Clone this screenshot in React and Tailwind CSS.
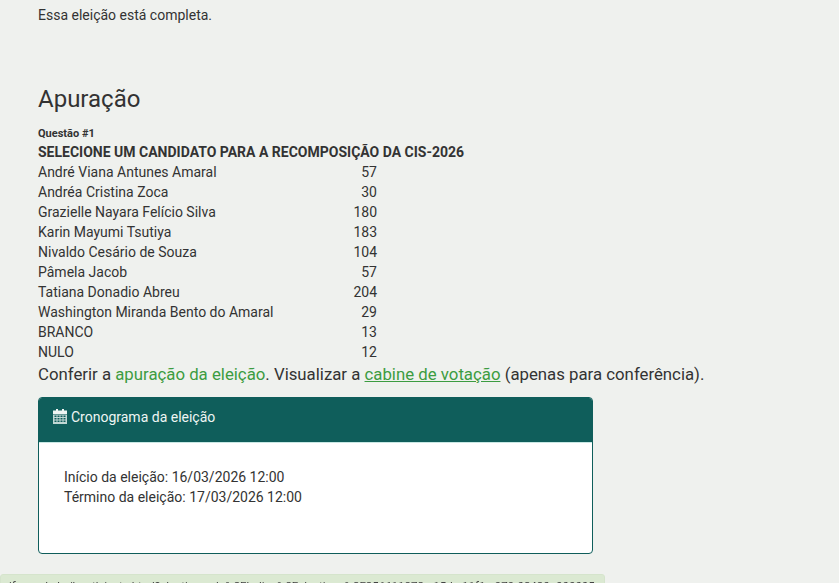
const results = [
  ['André Viana Antunes Amaral', 57],
  ['Andréa Cristina Zoca', 30],
  ['Grazielle Nayara Felício Silva', 180],
  ['Karin Mayumi Tsutiya', 183],
  ['Nivaldo Cesário de Souza', 104],
  ['Pâmela Jacob', 57],
  ['Tatiana Donadio Abreu', 204],
  ['Washington Miranda Bento do Amaral', 29],
  ['BRANCO', 13],
  ['NULO', 12],
]

// fa-calendar from the old icon font: solid top band, fine day grid
function CalendarIcon() {
  return (
    <svg width="14" height="15" viewBox="0 0 14 15" fill="currentColor" className="shrink-0">
      <rect x="3" y="0" width="2" height="3" />
      <rect x="9" y="0" width="2" height="3" />
      <rect x="0" y="1.5" width="14" height="3.5" />
      <path
        fillRule="evenodd"
        opacity="0.8"
        d="M0 5.5h14V15H0zM1.5 6.5v1.5h2V6.5zM4.5 6.5v1.5h2V6.5zM7.5 6.5v1.5h2V6.5zM10.5 6.5v1.5h2V6.5zM1.5 9v1.5h2V9zM4.5 9v1.5h2V9zM7.5 9v1.5h2V9zM10.5 9v1.5h2V9zM1.5 11.5V13h2v-1.5zM4.5 11.5V13h2v-1.5zM7.5 11.5V13h2v-1.5zM10.5 11.5V13h2v-1.5z"
      />
    </svg>
  )
}

export default function App() {
  return (
    <div className="h-[583px] overflow-hidden bg-[#eff1ee] pl-[38px] font-['Roboto',sans-serif] text-[14px] leading-[20px] text-[#333]">
      <p className="pt-[5px]">Essa eleição está completa.</p>

      <h2 className="mt-[61px] text-[24px] leading-[26px]">Apuração</h2>

      <p className="mt-[15px] text-[11px] leading-[14px] font-bold">Questão #1</p>
      <p className="mt-[1px] font-bold">SELECIONE UM CANDIDATO PARA A RECOMPOSIÇÃO DA CIS-2026</p>

      <div className="w-[339px]">
        {results.map(([name, votes]) => (
          <div key={name} className="flex justify-between">
            <span>{name}</span>
            <span>{votes}</span>
          </div>
        ))}
      </div>

      <p className="text-[16.8px] leading-[24px]">
        Conferir a <a className="text-[#3c9c41]">apuração da eleição</a>. Visualizar a{' '}
        <a className="text-[#3c9c41] underline">cabine de votação</a> (apenas para conferência).
      </p>

      <div className="mt-[11px] h-[157px] w-[555px] overflow-hidden rounded-[4px] border border-[#0f5e5b] bg-white">
        <div className="flex h-[45px] items-center gap-[4px] border-b border-[#c9e8e4] bg-[#0f5e5b] pb-[7px] pl-[14px] text-[#eef5f3]">
          <CalendarIcon />
          <span>Cronograma da eleição</span>
        </div>
        <div className="pt-[24px] pl-[25px]">
          <p>Início da eleição: 16/03/2026 12:00</p>
          <p>Término da eleição: 17/03/2026 12:00</p>
        </div>
      </div>

      <div className="fixed top-[574px] left-0 h-[20px] w-[605px] overflow-hidden rounded-[3px] border border-[#d5e4cc] bg-[#dbe9d2] pt-[2px] pl-[8px] text-[11.5px] leading-[18px] whitespace-nowrap text-[#444]">
        ifmg.edu.br/booth/vote.html?election_url=%2Fhelios%2Felections%2F256611872a-15de-11f1-a979-02420a000005
      </div>
    </div>
  )
}
